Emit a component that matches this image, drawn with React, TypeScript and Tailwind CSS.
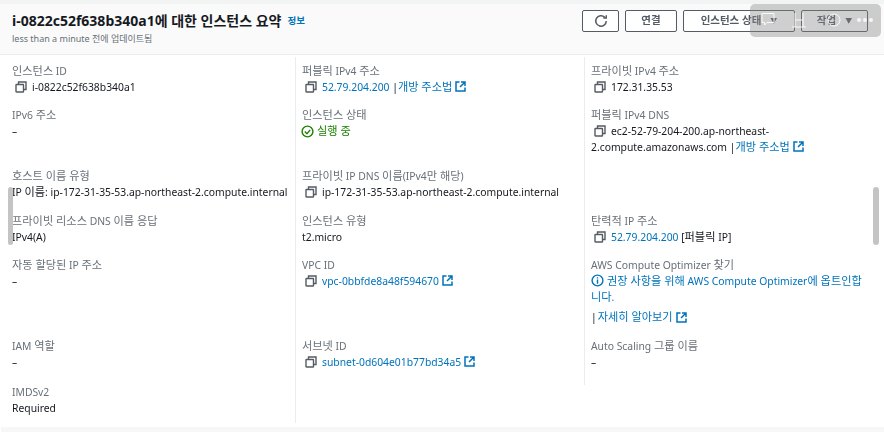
const font = { fontFamily: '"Noto Sans", "Noto Sans CJK KR", sans-serif' };

// Hangul runs sit a little larger than the Latin text around them
function Ko({ children }: { children: string }) {
  return (
    <>
      {children.split(/([가-힣]+(?: [가-힣]+)*)/).map((part, i) =>
        i % 2 === 1 ? <span key={i} className="text-[11.2px] leading-none">{part}</span> : part
      )}
    </>
  );
}

function CopyIcon({ className = '' }: { className?: string }) {
  return (
    <svg className={`w-[12px] h-[12px] shrink-0 text-[#545b64] ${className}`} viewBox="0 0 12 12" fill="none" stroke="currentColor" strokeWidth="1.4">
      <rect x="1" y="3.5" width="7.5" height="7.5" rx="0.5" />
      <path d="M3.5 3.5V1h7.5v7.5H8.5" />
    </svg>
  );
}

function ExternalIcon() {
  return (
    <svg className="inline-block w-[11px] h-[11px] shrink-0 align-[-1px] text-[#0073bb]" viewBox="0 0 11 11" fill="none" stroke="currentColor" strokeWidth="1.5">
      <path d="M4.5 1H1v9h9V6.5" />
      <path d="M6 1h4v4M10 1L5 6" />
    </svg>
  );
}

function Cell({ label, children, border = true }: { label?: string; children?: React.ReactNode; border?: boolean }) {
  return (
    <div className={`pr-2 ${border ? 'border-l border-[#eaeded]' : ''}`}>
      {label && <div className="text-[10.35px] leading-[15px] text-[#687078]"><Ko>{label}</Ko></div>}
      <div className="text-[10.35px] leading-[16px] text-[#16191f]">{children}</div>
    </div>
  );
}

function Copy({ children }: { children: React.ReactNode }) {
  return (
    <div className="flex items-center gap-[5px] pl-[3px]">
      <CopyIcon />
      <span>{children}</span>
    </div>
  );
}

const link = 'text-[#0073bb]';

export default function App() {
  return (
    <div className="relative w-[884px] h-[434px] overflow-hidden bg-white" style={font}>
      <div className="blur-[0.3px]">
        <div className="h-[4px] bg-[#f2f3f3]" />
        <div className="h-[51px] bg-[#fafafa] border-b border-[#eaeded] flex justify-between pl-[12px] pr-[16px]">
          <div className="pt-[5px]">
            <div className="flex items-center gap-[6px]">
              <h1 className="text-[14px] leading-[24px] font-bold text-[#16191f]">i-0822c52f638b340a1에 대한 인스턴스 요약</h1>
              <span className="text-[9.5px] font-semibold text-[#0073bb]">정보</span>
            </div>
            <p className="text-[9px] leading-[12px] text-[#687078]">less than a minute 전에 업데이트됨</p>
          </div>
          <div className="flex gap-[6px] pt-[6px] text-[10.5px] font-semibold text-[#545b64]">
            <button className="w-[37px] h-[22px] border border-[#545b64] rounded-[2px] bg-white flex items-center justify-center">
              <svg className="w-[14px] h-[14px]" viewBox="0 0 12 12" fill="none" stroke="currentColor" strokeWidth="1.3">
                <path d="M10.5 6a4.5 4.5 0 1 1-1.4-3.3M10.5 1v2.5H8" />
              </svg>
            </button>
            <button className="w-[52px] h-[22px] border border-[#545b64] rounded-[2px] bg-white">연결</button>
            <button className="w-[112px] h-[22px] border border-[#545b64] rounded-[2px] bg-white flex items-center justify-center gap-[9px]">
              인스턴스 상태<span className="text-[7px]">▼</span>
            </button>
            <button className="w-[67px] h-[22px] border border-[#545b64] rounded-[2px] bg-white flex items-center justify-center gap-[9px]">
              작업<span className="text-[7px]">▼</span>
            </button>
          </div>
        </div>

        <div className="grid grid-cols-[295px_289px_1fr] grid-rows-[51px_61px_45px_44px_81px_46px_38px] mt-[2px] w-[872px] [&>div:nth-child(-n+3)]:pt-[7px] [&>div:nth-child(3n+1)]:pl-[12px] [&>div:nth-child(3n+2)]:pl-[6px] [&>div:nth-child(3n)]:pl-[6px]">
          <Cell label="인스턴스 ID" border={false}><Copy>i-0822c52f638b340a1</Copy></Cell>
          <Cell label="퍼블릭 IPv4 주소">
            <Copy>
              <span className={link}>52.79.204.200</span> |<span className={link}><Ko>개방 주소법</Ko></span>
              <span className="ml-[3px]"><ExternalIcon /></span>
            </Copy>
          </Cell>
          <Cell label="프라이빗 IPv4 주소"><Copy>172.31.35.53</Copy></Cell>

          <Cell label="IPv6 주소" border={false}>–</Cell>
          <Cell label="인스턴스 상태">
            <div className="flex items-center gap-[3px] -ml-[1px] text-[#1d8102]">
              <svg className="w-[13px] h-[13px]" viewBox="0 0 12 12" fill="none" stroke="currentColor" strokeWidth="1.3">
                <circle cx="6" cy="6" r="5" />
                <path d="M3.5 6l2 2 3-3.5" />
              </svg>
              <span><Ko>실행 중</Ko></span>
            </div>
          </Cell>
          <Cell label="퍼블릭 IPv4 DNS">
            <div>
              <CopyIcon className="inline-block ml-[3px] mr-[5px] align-[-2px]" />
              ec2-52-79-204-200.ap-northeast-2.compute.amazonaws.com |<span className={link}><Ko>개방 주소법</Ko></span>
              <span className="ml-[3px]"><ExternalIcon /></span>
            </div>
          </Cell>

          <Cell label="호스트 이름 유형" border={false}><span className="whitespace-nowrap"><Ko>IP 이름</Ko>: ip-172-31-35-53.ap-northeast-2.compute.internal</span></Cell>
          <Cell label="프라이빗 IP DNS 이름(IPv4만 해당)"><Copy>ip-172-31-35-53.ap-northeast-2.compute.internal</Copy></Cell>
          <Cell />

          <Cell label="프라이빗 리소스 DNS 이름 응답" border={false}>IPv4(A)</Cell>
          <Cell label="인스턴스 유형">t2.micro</Cell>
          <Cell label="탄력적 IP 주소">
            <Copy><span className={link}>52.79.204.200</span> [<Ko>퍼블릭</Ko> IP]</Copy>
          </Cell>

          <Cell label="자동 할당된 IP 주소" border={false}>–</Cell>
          <Cell label="VPC ID">
            <Copy><span className={link}>vpc-0bbfde8a48f594670</span> <ExternalIcon /></Copy>
          </Cell>
          <Cell label="AWS Compute Optimizer 찾기">
            <div className="text-[#0073bb]">
              <svg className="inline-block w-[13px] h-[13px] align-[-2px] mr-[3px]" viewBox="0 0 12 12" fill="none" stroke="currentColor" strokeWidth="1.3">
                <circle cx="6" cy="6" r="5" />
                <path d="M6 5v4M6 3v1.2" />
              </svg>
              <Ko>권장 사항을 위해</Ko> AWS Compute Optimizer<Ko>에 옵트인합니다.</Ko>
            </div>
            <div className="mt-[4px] flex items-center gap-[1px]">
              <span>|</span><span className={`${link} mr-[2px]`}><Ko>자세히 알아보기</Ko></span><ExternalIcon />
            </div>
          </Cell>

          <Cell label="IAM 역할" border={false}>–</Cell>
          <Cell label="서브넷 ID">
            <Copy><span className={link}>subnet-0d604e01b77bd34a5</span> <ExternalIcon /></Copy>
          </Cell>
          <Cell label="Auto Scaling 그룹 이름">–</Cell>

          <Cell label="IMDSv2" border={false}>Required</Cell>
          <Cell />
        </div>
      </div>

      <div className="absolute left-[1px] right-0 top-[427px] h-[5px] bg-[#f7f7f7]" />

      {/* scrollbars */}
      <div className="absolute left-[8px] top-[187px] w-[5px] h-[58px] rounded-[3px] bg-[#c4c4c4]" />
      <div className="absolute left-[873px] top-[187px] w-[6px] h-[58px] rounded-[3px] bg-[#c4c4c4]" />

      {/* browser toolbar over the page */}
      <div className="absolute left-[750px] top-[4px] w-[131px] h-[33px] rounded-[5px] bg-[#888888]/40 text-white/90">
        <svg className="absolute left-[10px] top-[7px] w-[16px] h-[16px]" viewBox="0 0 16 16" fill="none" stroke="currentColor" strokeWidth="1">
          <path d="M2 2.5h12v9H7l-2.5 2.5v-2.5H2z" />
        </svg>
        <svg className="absolute left-[42px] top-[6px] w-[14px] h-[20px]" viewBox="0 0 14 20" fill="none" stroke="currentColor" strokeWidth="1">
          <path d="M3 3v14M11 3v14M0 17h14M3 10h8" />
        </svg>
        <svg className="absolute left-[77px] top-[9px] w-[14px] h-[14px]" viewBox="0 0 14 14" fill="none" stroke="currentColor" strokeWidth="1">
          <circle cx="7" cy="7" r="6" />
        </svg>
        <div className="absolute left-[107px] top-[14px] flex gap-[2px]">
          <span className="w-[4px] h-[4px] rounded-full bg-white/80" />
          <span className="w-[4px] h-[4px] rounded-full bg-white/80" />
          <span className="w-[4px] h-[4px] rounded-full bg-white/80" />
        </div>
      </div>
    </div>
  );
}
